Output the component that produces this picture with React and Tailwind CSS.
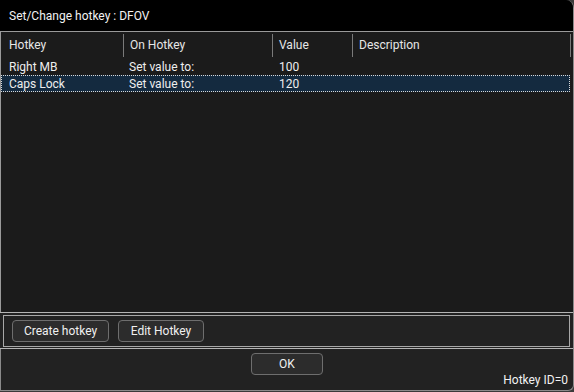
import React from 'react';

const cols = [
  { label: 'Hotkey', w: 'w-[123px]', pl: 'pl-[8px]' },
  { label: 'On Hotkey', w: 'w-[149px]', pl: 'pl-[6px]' },
  { label: 'Value', w: 'w-[80px]', pl: 'pl-[6px]' },
  { label: 'Description', w: 'w-[218px]', pl: 'pl-[6px]' },
];

const rows = [
  { key: 'Right MB', on: 'Set value to:', value: '100', desc: '' },
  { key: 'Caps Lock', on: 'Set value to:', value: '120', desc: '', selected: true },
];

function Btn({ children, className = '' }) {
  return (
    <button
      className={`h-[22px] rounded-[4px] border border-[#6e6e6e] bg-[#2c2c2c] text-[12px] text-[#f0f0f0] leading-none ${className}`}
    >
      {children}
    </button>
  );
}

export default function App() {
  return (
    <div
      className="w-[574px] h-[392px] bg-[#3a3a3a] overflow-hidden"
      style={{ fontFamily: 'Roboto, "Liberation Sans", sans-serif' }}
    >
      <div className="w-[574px] h-[391px] flex flex-col bg-[#222222] rounded-tr-[8px] rounded-br-[6px] overflow-hidden border-r border-b border-[#8a8a8a]">
        {/* Title */}
        <div className="h-[31px] shrink-0 bg-black flex items-center pl-[9px] text-[12px] text-[#f2f2f2]">
          Set/Change hotkey : DFOV
        </div>

        {/* Table */}
        <div className="h-[281px] shrink-0 bg-[#1b1b1b] border-t border-l border-[#9a9a9a] flex flex-col">
          <div className="h-[26px] flex text-[12px] text-[#e6e6e6]">
            {cols.map((c) => (
              <div key={c.label} className={`${c.w} ${c.pl} flex items-center relative`}>
                {c.label}
                <span className="absolute right-0 top-[2px] bottom-[1px] w-px bg-[#7a7a7a]" />
              </div>
            ))}
          </div>
          {rows.map((r) => (
            <div
              key={r.key}
              className={`h-[17px] flex items-center text-[12px] text-[#eeeeee] ${
                r.selected ? 'bg-[#142a3f] outline outline-1 outline-dotted outline-[#d8d8d8] -outline-offset-1 mr-[3px]' : ''
              }`}
            >
              <div className="w-[123px] pl-[8px]">{r.key}</div>
              <div className="w-[149px] pl-[5px]">{r.on}</div>
              <div className="w-[80px] pl-[6px]">{r.value}</div>
              <div className="flex-1">{r.desc}</div>
            </div>
          ))}
        </div>

        {/* Buttons panel */}
        <div className="border-t border-[#b4b4b4] pt-[2px] pb-[1px] border-b">
          <div className="mx-[3px] h-[32px] border border-[#a8a8a8] flex items-center gap-[9px] pl-[8px]">
            <Btn className="w-[97px]">Create hotkey</Btn>
            <Btn className="w-[86px]">Edit Hotkey</Btn>
          </div>
        </div>

        {/* Footer */}
        <div className="flex-1 relative flex justify-center pt-[4px] border-l border-[#8a8a8a]">
          <Btn className="w-[72px]">OK</Btn>
          <span className="absolute right-[5px] bottom-[1px] text-[12px] text-[#f2f2f2]">Hotkey ID=0</span>
        </div>
      </div>
    </div>
  );
}
